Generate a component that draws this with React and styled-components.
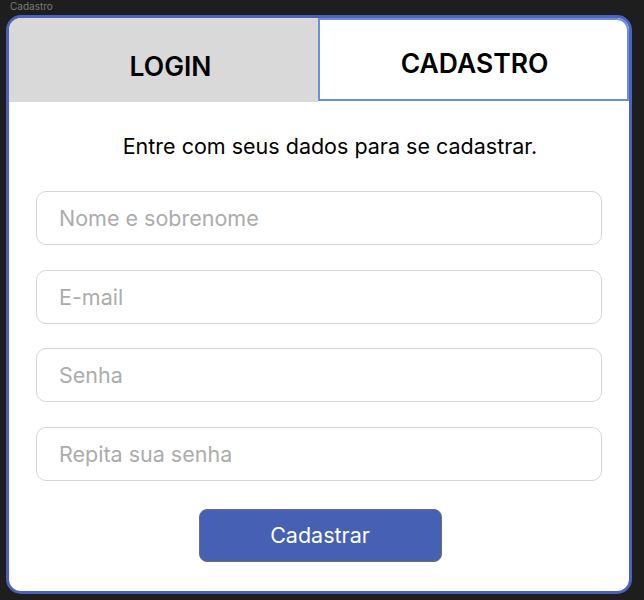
import React from "react";
import styled, { createGlobalStyle } from "styled-components";

const GlobalStyle = createGlobalStyle`
  body {
    margin: 0;
    background: #1e1e1e;
    font-family: Inter, "Noto Sans", sans-serif;
  }
`;

const Frame = styled.div`
  width: 644px;
  height: 600px;
  box-sizing: border-box;
  padding: 0 12px 0 6px;
  display: flex;
  flex-direction: column;
`;

const FrameLabel = styled.div`
  height: 15px;
  padding-left: 4px;
  font-size: 10px;
  line-height: 12px;
  color: #7a7a7a;
`;

const Card = styled.div`
  box-sizing: border-box;
  width: 626px;
  height: 579px;
  border: 3px solid #4a62bd;
  border-radius: 15px;
  background: #fff;
  overflow: hidden;
  display: flex;
  flex-direction: column;
`;

const Tabs = styled.div`
  display: grid;
  grid-template-columns: 309px 1fr;
  align-items: start;
  height: 84px;
`;

const Tab = styled.div`
  box-sizing: border-box;
  display: flex;
  align-items: center;
  justify-content: center;
  font-size: 26.5px;
  font-weight: 600;
  color: #000;
  background: ${(p) => (p.$active ? "#fff" : "#d9d9d9")};
  border: ${(p) => (p.$active ? "2px solid #6a8fe2" : "none")};
  border-top-right-radius: ${(p) => (p.$active ? "12px" : "0")};
  padding: ${(p) => (p.$active ? "6px 0 0 2px" : "12px 0 0 14px")};
  height: ${(p) => (p.$active ? "83px" : "84px")};
`;

const Body = styled.div`
  display: flex;
  flex-direction: column;
  padding: 31px 27px 0;
`;

const Subtitle = styled.p`
  margin: 0 0 32px;
  padding-left: 22px;
  text-align: center;
  font-size: 21.5px;
  line-height: 26px;
  color: #000;
`;

const Fields = styled.div`
  display: flex;
  flex-direction: column;
  gap: 24.5px;
`;

const Input = styled.input`
  box-sizing: border-box;
  width: 100%;
  height: 54px;
  border: 1px solid #d6d6d6;
  border-radius: 10px;
  padding: 0 22px;
  font-family: Inter, "Noto Sans", sans-serif;
  font-size: 21.5px;
  color: #222;
  outline: none;
  &::placeholder {
    color: #acacac;
  }
`;

const Button = styled.button`
  align-self: center;
  margin-top: 28px;
  margin-left: 2px;
  width: 243px;
  height: 53px;
  border: 1px solid #6f6f6f;
  border-radius: 8px;
  background: #4660b4;
  color: #fff;
  font-family: Inter, "Noto Sans", sans-serif;
  font-size: 21.5px;
  cursor: pointer;
`;

export default function App() {
  return (
    <>
      <GlobalStyle />
      <Frame>
        <FrameLabel>Cadastro</FrameLabel>
        <Card>
          <Tabs>
            <Tab>LOGIN</Tab>
            <Tab $active>CADASTRO</Tab>
          </Tabs>
          <Body>
            <Subtitle>Entre com seus dados para se cadastrar.</Subtitle>
            <Fields>
              <Input placeholder="Nome e sobrenome" />
              <Input placeholder="E-mail" />
              <Input type="password" placeholder="Senha" />
              <Input type="password" placeholder="Repita sua senha" />
            </Fields>
            <Button>Cadastrar</Button>
          </Body>
        </Card>
      </Frame>
    </>
  );
}
